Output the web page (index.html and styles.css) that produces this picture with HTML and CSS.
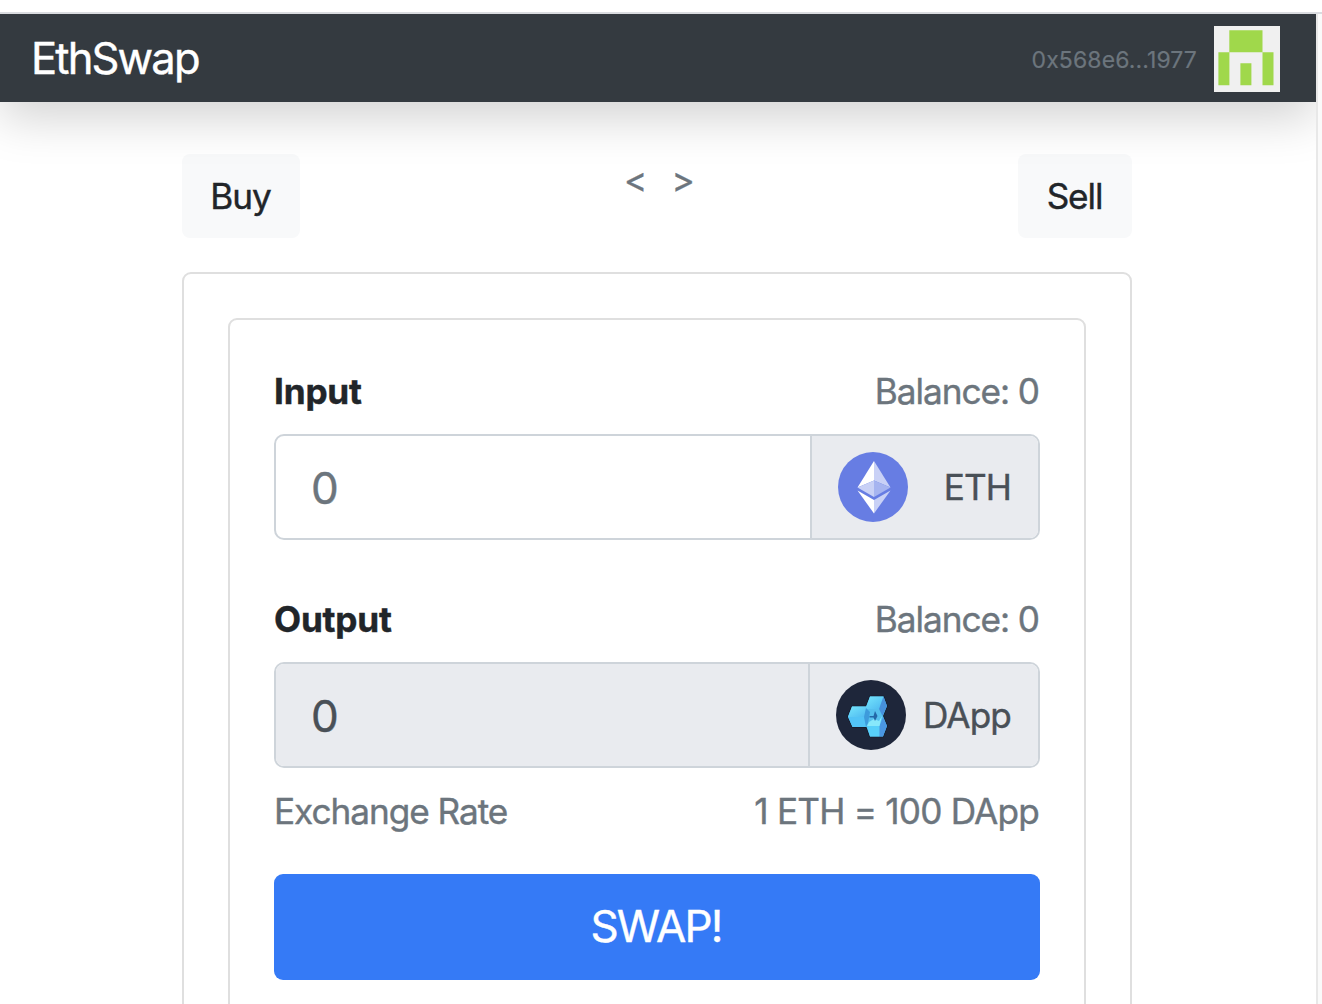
FILE: index.html
```html
<!DOCTYPE html>
<html lang="en">
<head>
<meta charset="utf-8">
<title>EthSwap</title>
<link rel="stylesheet" href="styles.css">
</head>
<body>
<div class="page">
  <nav class="navbar">
    <span class="brand">EthSwap</span>
    <div class="account">
      <span class="address">0x568e6...1977</span>
      <svg class="identicon" viewBox="0 0 66 66">
        <rect width="66" height="66" fill="#f0f0f0"/>
        <path fill="#a0d84b" d="M15.3 4.3h33.2v21.9H15.3zM4.4 26.2h11v33h-11zM26.4 37.2h11v22h-11zM48.5 26.2h11v33h-11z"/>
      </svg>
    </div>
  </nav>
  <main class="content">
    <div class="tabs">
      <button class="tab">Buy</button>
      <span class="arrows"><span>&lt;</span><span>&gt;</span></span>
      <button class="tab sell">Sell</button>
    </div>
    <section class="card outer">
      <div class="card inner">
        <div class="row"><label class="bold">Input</label><span class="muted balance">Balance: 0</span></div>
        <div class="group">
          <div class="field">0</div>
          <div class="addon eth">
            <svg class="coin" viewBox="0 0 70 70">
              <circle cx="35" cy="35" r="35" fill="#677de3"/>
              <path fill="#fff" d="M36 9v19.500L19.500 35.500z"/>
              <path fill="#c9d1f6" d="M36 9v19.500l16.500 7z"/>
              <path fill="#c9d1f6" d="M36 28.500V45l-16.500-9.500z"/>
              <path fill="#a6b4f0" d="M36 28.500V45l16.500-9.500z"/>
              <path fill="#fff" d="M19.500 38.500L36 48v13.500z"/>
              <path fill="#c9d1f6" d="M52.500 38.500L36 48v13.500z"/>
            </svg>
            <span>ETH</span>
          </div>
        </div>
        <div class="row second"><label class="bold">Output</label><span class="muted balance">Balance: 0</span></div>
        <div class="group">
          <div class="field disabled">0</div>
          <div class="addon dapp">
            <svg class="coin" viewBox="0 0 70 70">
              <defs>
                <linearGradient id="ice" x1="0" y1="0" x2="1" y2="1"><stop offset="0" stop-color="#76e6fd"/><stop offset="1" stop-color="#4db8f0"/></linearGradient>
              </defs>
              <circle cx="35" cy="35" r="35" fill="#1e263a"/>
              <path fill="#55c0ee" stroke="#141a2a" stroke-width="1.500" paint-order="stroke" d="M16 26.500h14l4-10h13.500L51 26l-4 10 4 10-4 10.500H34L30.500 47H16.500L12 36.500z"/>
              <path fill="url(#ice)" d="M16 26.500h15L28 37H12z"/>
              <path fill="#52c3f6" d="M12 37h16l2.500 10h-14z"/>
              <path fill="url(#ice)" d="M34 16.500h13.500L43 29H29.500z"/>
              <path fill="#4790db" d="M47.500 16.500L51 26l-4.500 10L43 29z"/>
              <path fill="#3d9bdc" d="M30 28l4 4-2 11-2 4-2-10z"/>
              <path fill="#58d0fa" d="M31 46h12.500v10.500H34z"/>
              <path fill="#4a96e2" d="M43.500 46l3.500-9 4 9-4 10.500h-3.500z"/>
              <path fill="#87e8fb" d="M33 42l5-3 5 2 3-5-2.500 10H31z"/>
              <path fill="#2468a8" d="M39 31l2.500 5-2.500 5-1.500-3.500h-4v-1.500h4z"/>
            </svg>
            <span>DApp</span>
          </div>
        </div>
        <div class="row rate"><span class="muted rate-label">Exchange Rate</span><span class="muted rate-value">1 ETH = 100 DApp</span></div>
        <button class="swap">SWAP!</button>
      </div>
    </section>
  </main>
</div>
</body>
</html>
```
FILE: styles.css
```css
* { box-sizing: border-box; }
html, body { height: 100%; }
body {
  margin: 0;
  padding-top: 12px;
  overflow: hidden;
  background: #fff;
  font-family: Inter, sans-serif;
  font-size: 35.2px;
  line-height: 52px;
  letter-spacing: -0.9px;
  -webkit-text-stroke: .4px currentColor;
  color: #212529;
}
button { font: inherit; letter-spacing: inherit; border: 0; margin: 0; padding: 0; }
.page {
  height: 992px;
  overflow: hidden;
  border-top: 2px solid #dadce0;
  background: linear-gradient(to right, transparent 1316px, #e8e8e8 1316px, #e8e8e8 1318px, #fafafa 1318px);
}
.navbar {
  width: 1316px;
  height: 88px;
  padding: 0 36px 0 31px;
  display: flex;
  align-items: center;
  justify-content: space-between;
  background: #343a40;
  box-shadow: 0 16px 48px rgba(0, 0, 0, .175);
  clip-path: inset(0 0 -90px 0);
}
.brand { color: #fff; font-size: 43.5px; letter-spacing: -1.85px; }
.account { display: flex; align-items: center; gap: 17px; padding-top: 2px; }
.address { color: #6c757d; font-size: 23px; letter-spacing: .1px; padding-top: 2px; -webkit-text-stroke-width: .2px; }
.identicon { width: 66px; height: 66px; display: block; }
.content { width: 950px; margin: 52px 0 0 182px; }
.tabs { display: flex; justify-content: space-between; align-items: flex-start; height: 118px; }
.tab { width: 118px; height: 84px; border-radius: 8px; background: #f8f9fa; color: #212529; padding: 0 1px 1px 0; letter-spacing: -1.1px; }
.sell { width: 114px; }
.arrows { display: flex; gap: 25px; color: #6c757d; margin-top: -1px; }
.card { border: 2px solid #dfdfdf; border-radius: 9px; padding: 44px; }
.outer { height: 900px; }
.inner { height: 850px; }
.row { display: flex; justify-content: space-between; height: 70px; padding: 1px 1px 0 0; }
.second { margin-top: 52px; }
.muted { color: #6c757d; }
.balance { letter-spacing: -1.05px; }
.bold { font-weight: 700; letter-spacing: -.2px; }
.group { display: flex; height: 106px; border: 2px solid #ced4da; border-radius: 10px; overflow: hidden; }
.field { flex: 1; display: flex; align-items: center; padding: 2px 0 0 35px; font-size: 44px; color: #6c757d; }
.disabled { background: #e9ebef; color: #495057; }
.addon { display: flex; align-items: center; justify-content: space-between; border-left: 2px solid #ced4da; background: #e9ebef; color: #495057; padding: 0 27px 0 26px; }
.eth { width: 228px; }
.dapp { width: 230px; }
.coin { width: 70px; height: 70px; }
.rate { margin-top: 17px; height: 89px; padding-top: 0; }
.rate-label { letter-spacing: -1.05px; }
.rate-value { letter-spacing: -.8px; }
.swap { display: block; width: 100%; height: 106px; border-radius: 9px; background: #357af6; color: #fff; font-size: 44px; letter-spacing: -1.8px; padding: 0 2px 2px 0; }
```
